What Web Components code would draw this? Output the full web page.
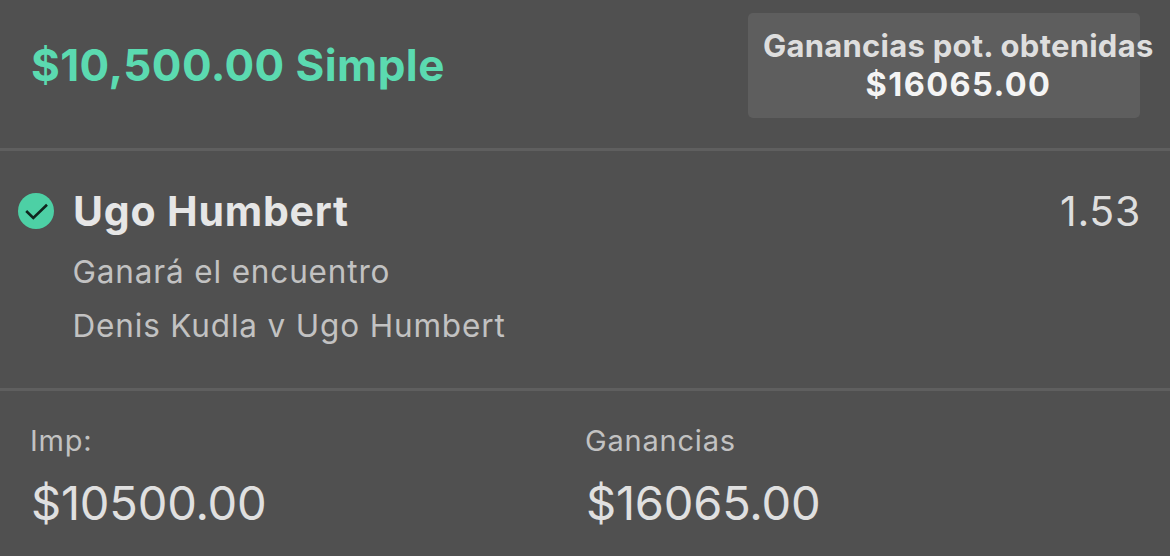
<!DOCTYPE html>
<html lang="es">
<head>
<meta charset="utf-8">
<meta name="viewport" content="width=device-width, initial-scale=1.0" />
<title>Apuesta</title>
<style>
    html,body {width:100%;height:100%;padding:0px;margin:0px;overflow:hidden}
    body {background:#505050;font-family:Inter, "Liberation Sans", sans-serif}
</style>

<template id="tmpl-slip">
    <style>
    :host {
        display:flex;
        flex-flow:column nowrap;
        height:100%;
        background:#505050;
        color:#e2e2e2;
        white-space:nowrap;
    }
    </style>
    <slot></slot>
</template>

<template id="tmpl-header">
    <style>
    :host {
        display:flex;
        align-items:center;
        justify-content:space-between;
        box-sizing:border-box;
        flex:none;
        height:151px;
        padding:13px 30px 30px 31px;
        border-bottom:3px solid #5f5f5f;
    }
    .title {
        color:#5bdab0;
        font-size:44px;
        font-weight:650;
        line-height:53px;
        letter-spacing:.42px;
    }
    </style>
    <div class="title"><slot></slot></div>
    <slot name="payout"></slot>
</template>

<template id="tmpl-payout">
    <style>
    :host {
        display:flex;
        flex-flow:column nowrap;
        box-sizing:border-box;
        width:392px;
        height:105px;
        padding:14px 14px 0 15px;
        border-radius:5px;
        background:#5e5e5e;
        font-weight:650;
        line-height:38px;
    }
    .label {font-size:31px;color:#dedede;letter-spacing:.25px}
    .amount {font-size:32.5px;color:#f4f4f4;letter-spacing:1.4px;text-align:center;padding-left:28px;margin-top:1px}
    </style>
    <div class="label"><slot name="label"></slot></div>
    <div class="amount"><slot></slot></div>
</template>

<template id="tmpl-check">
    <style>
    :host {display:block;width:36px;height:36px}
    svg {display:block}
    </style>
    <svg width="36" height="36" viewBox="0 0 36 36">
        <circle cx="18" cy="18" r="18" fill="#4dd0a5"/>
        <path d="M8.2 18 L15.3 25 L29 11.8" fill="none" stroke="#10251e" stroke-width="2.6"/>
    </svg>
</template>

<template id="tmpl-selection">
    <style>
    :host {
        display:grid;
        grid-template-columns:36px 1fr auto;
        grid-template-rows:50px auto;
        column-gap:18px;
        align-items:center;
        align-content:start;
        box-sizing:border-box;
        flex:none;
        height:240px;
        padding:35px 29px 0 18px;
        border-bottom:3px solid #5f5f5f;
    }
    .name {font-size:41px;font-weight:700;line-height:50px;letter-spacing:.8px;color:#e6e6e6;padding-left:1px}
    .odds {font-size:41px;line-height:50px;letter-spacing:.7px;color:#dedede}
    .details {
        grid-column:2 / 4;
        margin-top:9px;
        padding-left:.5px;
        font-size:31.5px;
        line-height:54px;
        letter-spacing:.84px;
        color:#c2c2c2;
    }
    </style>
    <bet-check></bet-check>
    <div class="name"><slot name="name"></slot></div>
    <div class="odds"><slot name="odds"></slot></div>
    <div class="details"><slot></slot></div>
</template>

<template id="tmpl-totals">
    <style>
    :host {
        display:grid;
        grid-template-columns:1fr 1fr;
        flex:1;
        padding:30px 30px 0;
    }
    </style>
    <slot></slot>
</template>

<template id="tmpl-total">
    <style>
    :host {display:flex;flex-flow:column nowrap}
    .label {font-size:29px;line-height:40px;letter-spacing:.8px;color:#c2c2c2}
    .value {font-size:47px;line-height:60px;letter-spacing:-.2px;margin-top:12px;padding-left:1px;color:#e0e0e0}
    </style>
    <div class="label"><slot name="label"></slot></div>
    <div class="value"><slot></slot></div>
</template>
</head>
<body>

<bet-slip>
    <bet-header>$10,500.00 Simple<bet-payout slot="payout"><span slot="label">Ganancias pot. obtenidas</span>$16065.00</bet-payout></bet-header>
    <bet-selection>
        <span slot="name">Ugo Humbert</span>
        <span slot="odds">1.53</span>
        <div>Ganará el encuentro</div>
        <div>Denis Kudla v Ugo Humbert</div>
    </bet-selection>
    <bet-totals>
        <bet-total><span slot="label">Imp:</span>$10500.00</bet-total>
        <bet-total><span slot="label">Ganancias</span>$16065.00</bet-total>
    </bet-totals>
</bet-slip>

</body>

<script>
// every element only clones its own template
class BetElement extends HTMLElement {
    constructor() {
        super();
        let tmpl=document.getElementById(this.constructor.tmpl);
        this.attachShadow({mode: 'open'}).append(tmpl.content.cloneNode(true));
    }
}

class BetCheck extends BetElement { static tmpl="tmpl-check" }
class BetPayout extends BetElement { static tmpl="tmpl-payout" }
class BetHeader extends BetElement { static tmpl="tmpl-header" }
class BetSelection extends BetElement { static tmpl="tmpl-selection" }
class BetTotal extends BetElement { static tmpl="tmpl-total" }
class BetTotals extends BetElement { static tmpl="tmpl-totals" }
class BetSlip extends BetElement { static tmpl="tmpl-slip" }

customElements.define("bet-check", BetCheck);
customElements.define("bet-payout", BetPayout);
customElements.define("bet-header", BetHeader);
customElements.define("bet-selection", BetSelection);
customElements.define("bet-total", BetTotal);
customElements.define("bet-totals", BetTotals);
customElements.define("bet-slip", BetSlip);
</script>
</html>
